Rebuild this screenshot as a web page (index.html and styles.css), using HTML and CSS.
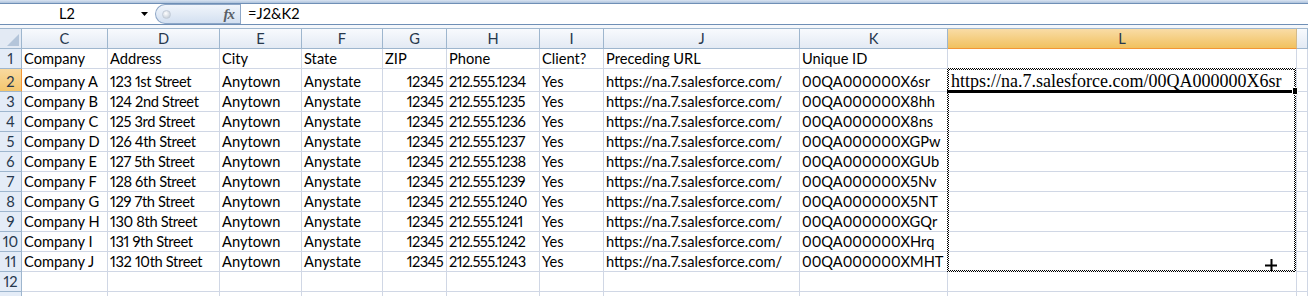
FILE: index.html
```html
<!DOCTYPE html>
<html>
<head>
<meta charset="utf-8">
<link rel="stylesheet" href="styles.css">
</head>
<body>
<div class="topstrip"></div>
<div class="fbar">
  <div class="namebox"><span class="nametext">L2</span><svg class="arrow" width="8" height="5" viewBox="0 0 8 5"><path d="M0 0H7L3.5 4Z" fill="#000"/></svg></div>
  <div class="fxpill"><span class="dot"></span><span class="fx">fx</span></div>
  <div class="formula">=J2&amp;K2</div>
</div>
<div class="gap"></div>
<div class="sheet">
  <div class="corner"></div>
  <div class="colhdr">C</div><div class="colhdr">D</div><div class="colhdr">E</div><div class="colhdr">F</div><div class="colhdr">G</div><div class="colhdr">H</div><div class="colhdr">I</div><div class="colhdr">J</div><div class="colhdr">K</div><div class="colhdr sel">L</div><div class="colhdr"></div>

  <div class="rowhdr">1</div>
  <div class="cell">Company</div><div class="cell">Address</div><div class="cell">City</div><div class="cell">State</div><div class="cell">ZIP</div><div class="cell">Phone</div><div class="cell">Client?</div><div class="cell">Preceding URL</div><div class="cell">Unique ID</div><div class="cell"></div><div class="cell"></div>

  <div class="rowhdr sel">2</div>
  <div class="cell">Company A</div><div class="cell addr">123 1st Street</div><div class="cell">Anytown</div><div class="cell">Anystate</div><div class="cell num">12345</div><div class="cell digits">212.555.1234</div><div class="cell">Yes</div><div class="cell">https://na.7.salesforce.com/</div><div class="cell">00QA000000X6sr</div><div class="cell serif">https://na.7.salesforce.com/00QA000000X6sr</div><div class="cell"></div>

  <div class="rowhdr">3</div>
  <div class="cell">Company B</div><div class="cell addr">124 2nd Street</div><div class="cell">Anytown</div><div class="cell">Anystate</div><div class="cell num">12345</div><div class="cell digits">212.555.1235</div><div class="cell">Yes</div><div class="cell">https://na.7.salesforce.com/</div><div class="cell">00QA000000X8hh</div><div class="cell"></div><div class="cell"></div>

  <div class="rowhdr">4</div>
  <div class="cell">Company C</div><div class="cell addr">125 3rd Street</div><div class="cell">Anytown</div><div class="cell">Anystate</div><div class="cell num">12345</div><div class="cell digits">212.555.1236</div><div class="cell">Yes</div><div class="cell">https://na.7.salesforce.com/</div><div class="cell">00QA000000X8ns</div><div class="cell"></div><div class="cell"></div>

  <div class="rowhdr">5</div>
  <div class="cell">Company D</div><div class="cell addr">126 4th Street</div><div class="cell">Anytown</div><div class="cell">Anystate</div><div class="cell num">12345</div><div class="cell digits">212.555.1237</div><div class="cell">Yes</div><div class="cell">https://na.7.salesforce.com/</div><div class="cell">00QA000000XGPw</div><div class="cell"></div><div class="cell"></div>

  <div class="rowhdr">6</div>
  <div class="cell">Company E</div><div class="cell addr">127 5th Street</div><div class="cell">Anytown</div><div class="cell">Anystate</div><div class="cell num">12345</div><div class="cell digits">212.555.1238</div><div class="cell">Yes</div><div class="cell">https://na.7.salesforce.com/</div><div class="cell">00QA000000XGUb</div><div class="cell"></div><div class="cell"></div>

  <div class="rowhdr">7</div>
  <div class="cell">Company F</div><div class="cell addr">128 6th Street</div><div class="cell">Anytown</div><div class="cell">Anystate</div><div class="cell num">12345</div><div class="cell digits">212.555.1239</div><div class="cell">Yes</div><div class="cell">https://na.7.salesforce.com/</div><div class="cell">00QA000000X5Nv</div><div class="cell"></div><div class="cell"></div>

  <div class="rowhdr">8</div>
  <div class="cell">Company G</div><div class="cell addr">129 7th Street</div><div class="cell">Anytown</div><div class="cell">Anystate</div><div class="cell num">12345</div><div class="cell digits">212.555.1240</div><div class="cell">Yes</div><div class="cell">https://na.7.salesforce.com/</div><div class="cell">00QA000000X5NT</div><div class="cell"></div><div class="cell"></div>

  <div class="rowhdr">9</div>
  <div class="cell">Company H</div><div class="cell addr">130 8th Street</div><div class="cell">Anytown</div><div class="cell">Anystate</div><div class="cell num">12345</div><div class="cell digits">212.555.1241</div><div class="cell">Yes</div><div class="cell">https://na.7.salesforce.com/</div><div class="cell">00QA000000XGQr</div><div class="cell"></div><div class="cell"></div>

  <div class="rowhdr">10</div>
  <div class="cell">Company I</div><div class="cell addr">131 9th Street</div><div class="cell">Anytown</div><div class="cell">Anystate</div><div class="cell num">12345</div><div class="cell digits">212.555.1242</div><div class="cell">Yes</div><div class="cell">https://na.7.salesforce.com/</div><div class="cell">00QA000000XHrq</div><div class="cell"></div><div class="cell"></div>

  <div class="rowhdr">11</div>
  <div class="cell">Company J</div><div class="cell addr">132 10th Street</div><div class="cell">Anytown</div><div class="cell">Anystate</div><div class="cell num">12345</div><div class="cell digits">212.555.1243</div><div class="cell">Yes</div><div class="cell">https://na.7.salesforce.com/</div><div class="cell">00QA000000XMHT</div><div class="cell"></div><div class="cell"></div>

  <div class="rowhdr">12</div>
  <div class="cell"></div><div class="cell"></div><div class="cell"></div><div class="cell"></div><div class="cell"></div><div class="cell"></div><div class="cell"></div><div class="cell"></div><div class="cell"></div><div class="cell"></div><div class="cell"></div>

  <div class="rowhdr"></div>
  <div class="cell"></div><div class="cell"></div><div class="cell"></div><div class="cell"></div><div class="cell"></div><div class="cell"></div><div class="cell"></div><div class="cell"></div><div class="cell"></div><div class="cell"></div><div class="cell"></div>

  <div class="ants ants-top"></div>
  <div class="ants ants-bottom"></div>
  <div class="ants ants-left"></div>
  <div class="ants ants-right"></div>
  <div class="activeline"></div>
  <div class="handle"></div>
  <svg class="cursor" width="13" height="13" viewBox="0 0 13 13"><path d="M0 6.5H12M6.5 0V12" stroke="#000" stroke-width="2"/></svg>
</div>
</body>
</html>
```

FILE: styles.css
```css
html, body {
  margin: 0;
  padding: 0;
}
body {
  width: 1308px;
  height: 296px;
  overflow: hidden;
  background: #ffffff;
  font-family: "Lato", "Liberation Sans", sans-serif;
  font-size: 14.67px;
  font-variant-numeric: proportional-nums;
  color: #000;
}
.topstrip {
  height: 3px;
  background: linear-gradient(#dae4f2, #aec3dc);
}
.fbar {
  display: flex;
  height: 20px;
  border-top: 1px solid #6f8fb6;
  border-bottom: 1px solid #6f8fb6;
  background: #fff;
}
.namebox {
  width: 155px;
  display: flex;
  align-items: center;
}
.nametext {
  width: 134px;
  text-align: center;
  line-height: 20px;
}
.arrow {
  margin-left: 7px;
}
.fxpill {
  width: 85px;
  box-sizing: border-box;
  border: 1px solid #8ea7c7;
  border-right: none;
  border-radius: 11px 0 0 11px;
  background: linear-gradient(#f1f5fb, #d3e0f1);
  display: flex;
  align-items: center;
  justify-content: space-between;
  padding: 0 6px 0 6px;
}
.dot {
  width: 9px;
  height: 9px;
  border-radius: 50%;
  background: radial-gradient(circle at 40% 35%, #ffffff, #b7c2cf);
  border: 1px solid #c3ccd8;
  box-sizing: border-box;
}
.fx {
  font-family: "Liberation Serif", serif;
  font-style: italic;
  font-weight: bold;
  font-size: 15px;
  color: #5a5f66;
  letter-spacing: -1px;
}
.formula {
  flex: 1;
  border-left: 1px solid #8ea7c7;
  padding-left: 7px;
  line-height: 20px;
}
.gap {
  height: 3px;
  background: #f4f7fb;
}
.sheet {
  position: relative;
  display: grid;
  grid-template-columns: 22px 86px 112px 82px 81px 64px 93px 64px 196px 148px 349px 1fr;
  grid-template-rows: 21px 20px 23px repeat(11, 20px);
}
.corner {
  box-sizing: border-box;
  border-top: 1px solid #9eb6ce;
  border-right: 1px solid #9eb6ce;
  border-bottom: 1px solid #9eb6ce;
  background: #e3eaf4;
  position: relative;
}
.corner::after {
  content: "";
  position: absolute;
  right: 2px;
  bottom: 2px;
  width: 0;
  height: 0;
  border-left: 12px solid transparent;
  border-bottom: 12px solid #b4c5da;
}
.colhdr {
  box-sizing: border-box;
  border-top: 1px solid #9eb6ce;
  border-right: 1px solid #9eb6ce;
  border-bottom: 1px solid #9eb6ce;
  background: linear-gradient(#f8fafd, #e3eaf4);
  text-align: center;
  line-height: 19px;
  color: #27384d;
}
.colhdr.sel {
  background: linear-gradient(#f9dca6, #f1c15f);
  border-bottom-color: #f29536;
  border-right-color: #d2ba8b;
}
.rowhdr {
  box-sizing: border-box;
  border-right: 1px solid #9eb6ce;
  border-bottom: 1px solid #9eb6ce;
  background: #e4ecf7;
  display: flex;
  align-items: flex-end;
  justify-content: center;
  line-height: 18px;
  color: #27384d;
}
.rowhdr.sel {
  background: linear-gradient(#f9d99f, #f3c66e);
  border-right-color: #f29536;
}
.cell {
  box-sizing: border-box;
  border-right: 1px solid #d0d7e5;
  border-bottom: 1px solid #d0d7e5;
  padding: 0 2px 0 2px;
  display: flex;
  align-items: flex-end;
  white-space: nowrap;
  overflow: hidden;
  line-height: 18px;
}
.cell.num {
  justify-content: flex-end;
  letter-spacing: -0.6px;
  padding-right: 3px;
}
.cell.digits {
  letter-spacing: -0.6px;
}
.cell.addr {
  letter-spacing: -0.35px;
}
.cell.serif {
  font-family: "Liberation Serif", serif;
  font-size: 18px;
  overflow: visible;
  padding-left: 3px;
  line-height: 20px;
}
.ants {
  position: absolute;
  background: repeating-conic-gradient(#000 0 25%, #fff 0 50%) 0 0 / 2px 2px;
}
.ants-top {
  left: 947px;
  top: 40px;
  width: 349px;
  height: 2px;
}
.ants-bottom {
  left: 947px;
  top: 242px;
  width: 349px;
  height: 2px;
}
.ants-left {
  left: 947px;
  top: 40px;
  width: 2px;
  height: 204px;
}
.ants-right {
  left: 1294px;
  top: 40px;
  width: 2px;
  height: 204px;
}
.activeline {
  position: absolute;
  left: 947px;
  top: 62px;
  width: 346px;
  height: 3px;
  background: #000;
}
.handle {
  position: absolute;
  left: 1292px;
  top: 59px;
  width: 4px;
  height: 6px;
  background: #000;
  border: 1px solid #fff;
  border-radius: 1px;
}
.cursor {
  position: absolute;
  left: 1265px;
  top: 231px;
}
```
